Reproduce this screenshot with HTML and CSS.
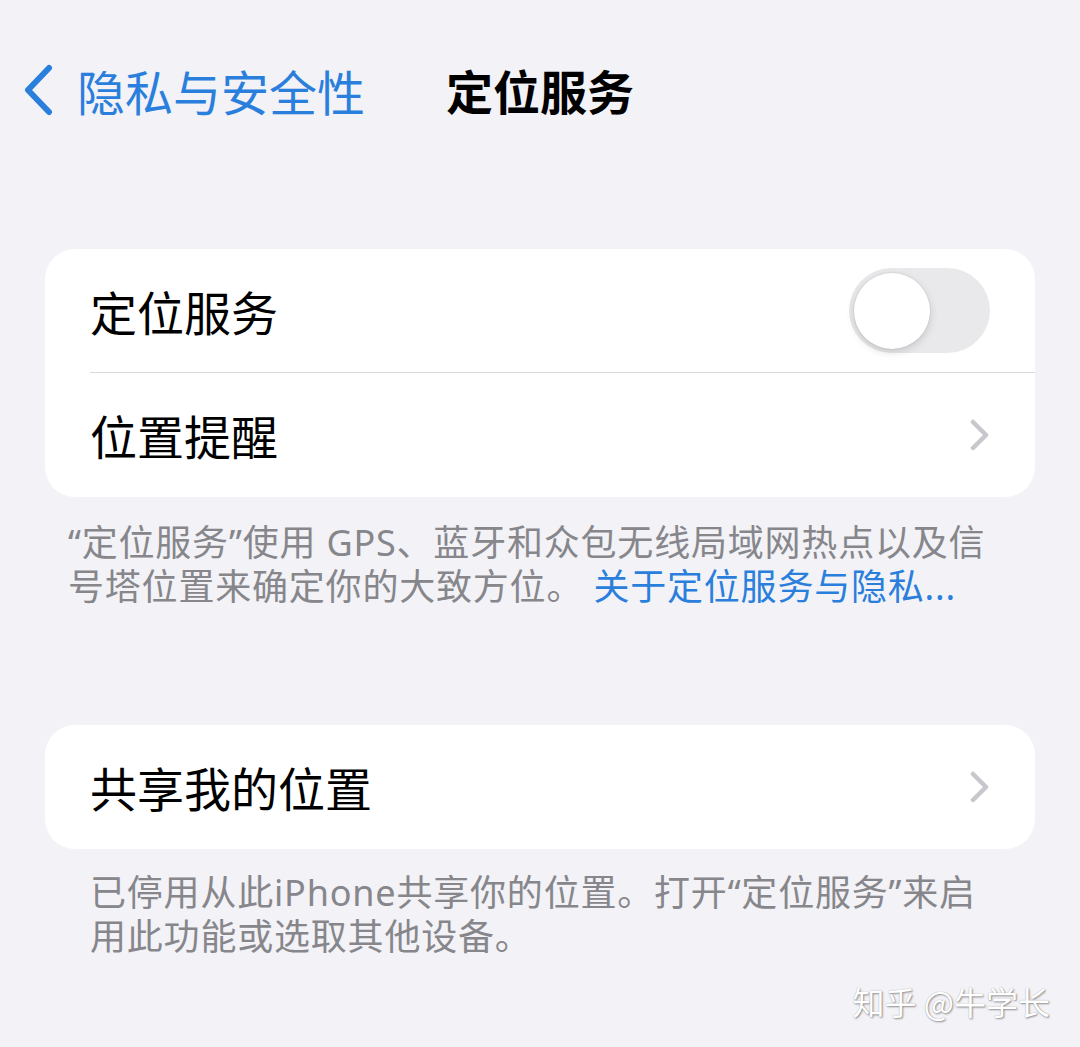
FILE: index.html
```html
<!DOCTYPE html>
<html lang="zh-CN">
<head>
  <meta charset="UTF-8">
  <title>定位服务</title>
  <link rel="stylesheet" href="styles.css">
</head>
<body>
  <header class="nav">
    <a class="back" href="#">
      <svg class="back-icon" width="34" height="52" viewBox="0 0 34 52">
        <path d="M28 4 L7 26 L28 48" fill="none" stroke="currentColor" stroke-width="6" stroke-linecap="round" stroke-linejoin="round"/>
      </svg>
      <span>隐私与安全性</span>
    </a>
    <h1 class="title">定位服务</h1>
  </header>

  <main>
    <section class="group">
      <div class="row">
        <div class="row-body">
          <span class="label">定位服务</span>
          <span class="switch"><span class="knob"></span></span>
        </div>
      </div>
      <div class="row">
        <div class="row-body last">
          <span class="label">位置提醒</span>
          <svg class="chevron" width="20" height="32" viewBox="0 0 20 32">
            <path d="M3 3 L16 16 L3 29" fill="none" stroke="currentColor" stroke-width="4.5" stroke-linecap="round" stroke-linejoin="round"/>
          </svg>
        </div>
      </div>
    </section>
    <p class="note first">“定位服务”使用 GPS、蓝牙和众包无线局域网热点以及信号塔位置来确定你的大致方位。 <a href="#">关于定位服务与隐私...</a></p>

    <section class="group second">
      <div class="row">
        <div class="row-body last">
          <span class="label">共享我的位置</span>
          <svg class="chevron" width="20" height="32" viewBox="0 0 20 32">
            <path d="M3 3 L16 16 L3 29" fill="none" stroke="currentColor" stroke-width="4.5" stroke-linecap="round" stroke-linejoin="round"/>
          </svg>
        </div>
      </div>
    </section>
    <p class="note">已停用从此iPhone共享你的位置。打开“定位服务”来启用此功能或选取其他设备。</p>
  </main>

  <div class="watermark">知乎 @牛学长</div>
</body>
</html>
```

FILE: styles.css
```css
html, body { margin: 0; }
body {
  font-family: "Noto Sans CJK SC", "Noto Sans", sans-serif;
  background: #f2f2f7;
  color: #000;
  width: 1080px;
  min-height: 1047px;
  position: relative;
  overflow: hidden;
}
a { color: #2a7fdc; text-decoration: none; }

.nav {
  display: grid;
  grid-template-columns: 1fr auto 1fr;
  align-items: center;
  height: 60px;
  padding-top: 60px;
}
.back {
  display: flex;
  align-items: center;
  gap: 22px;
  padding-left: 21px;
  font-size: 48px;
  line-height: 60px;
}
.back-icon { display: block; }
.title {
  margin: 0;
  font-size: 47px;
  line-height: 60px;
  font-weight: 700;
}

main { padding: 0 45px; }

.group {
  margin-top: 129px;
  background: #fff;
  border-radius: 30px;
  overflow: hidden;
}
.group.second { margin-top: 116px; }
.row { padding-left: 45px; }
.row-body {
  display: flex;
  align-items: center;
  justify-content: space-between;
  height: 123px;
  padding-right: 45px;
  border-bottom: 1px solid #d9d9de;
}
.row-body.last { border-bottom: none; height: 124px; }
.label { font-size: 47px; line-height: 60px; }

.switch {
  width: 141px;
  height: 85px;
  border-radius: 43px;
  background: #e9e9eb;
  display: flex;
  align-items: center;
  padding-left: 5px;
  box-sizing: border-box;
}
.knob {
  width: 76px;
  height: 76px;
  border-radius: 50%;
  background: #fff;
  box-shadow: 0 3px 8px rgba(0,0,0,0.15), 0 0 0 1px rgba(0,0,0,0.04);
}
.chevron { color: #c7c7cc; display: block; }

.note {
  margin: 22px 0 0;
  padding: 0 45px;
  font-family: "Noto Sans", "Noto Sans CJK SC", sans-serif;
  font-size: 36px;
  line-height: 44px;
  letter-spacing: 0.8px;
  color: #86868b;
}
.note.first { padding-left: 23px; margin-top: 24px; }

.watermark {
  position: absolute;
  right: 30px;
  bottom: 28px;
  font-size: 32px;
  line-height: 36px;
  color: #fff;
  text-shadow: 1px 1px 2px rgba(0,0,0,0.4), 0 0 1px rgba(0,0,0,0.3);
}
```
